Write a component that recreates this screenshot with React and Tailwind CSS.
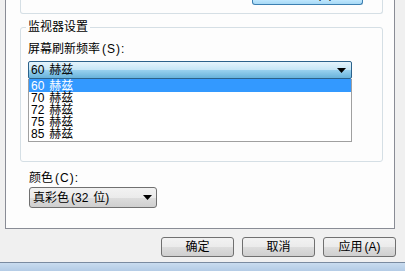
import React from "react";

const Arrow = () => (
  <svg width="9" height="5" viewBox="0 0 9 5" className="block">
    <polygon points="0,0 9,0 4.5,5" fill="#000" />
  </svg>
);

const grayBtn =
  "bg-[linear-gradient(to_bottom,#f2f2f2_0%,#ebebeb_50%,#dddddd_51%,#cfcfcf_100%)] border border-[#707070] rounded-[3px]";

export default function App() {
  const items = ["60", "70", "72", "75", "85"];
  return (
    <div className="w-[405px] h-[271px] bg-[#f0f0f0] overflow-hidden flex flex-col text-[12px] text-black font-['Liberation_Sans','Noto_Sans_CJK_SC',sans-serif]">
      {/* tab page */}
      <div className="ml-[5px] w-[390px] h-[229px] shrink-0 bg-[#fdfdfd] border-x border-b border-[#898c95] flex flex-col pl-[14px]">
        {/* previous group box (cut off) */}
        <div className="w-[363px] h-[14px] shrink-0 border-x border-b border-[#d5dfe5] rounded-b-[3px] flex justify-end items-end pr-[19px] pb-[8px]">
          <div className="w-[111px] h-[5px] overflow-hidden border-x border-b border-[#3c7fb1] rounded-b-[3px] bg-[linear-gradient(to_bottom,#bee6fd,#a7d9f5)]">
            <div className="h-[24px] mt-[-18px] flex items-center justify-center gap-[2px] leading-[12px]">
              <span className="w-[9px] h-[9px] rounded-full border border-[#555]"></span>
              <span>属性(P)</span>
            </div>
          </div>
        </div>

        {/* monitor settings group */}
        <div className="relative mt-[13px] w-[363px] h-[135px] shrink-0 border border-[#d5dfe5] rounded-[3px] pl-[7px]">
          <div className="absolute left-[5px] top-[-9px] px-[2px] bg-[#fdfdfd] leading-[16px] text-[12px]">
            监视器设置
          </div>
          <div className="mt-[14px] leading-[14px]">
            屏幕刷新频率<span className="ml-[2px] tracking-[1px]">(S):</span>
          </div>
          <div className="mt-[5px] w-[324px] h-[18px] border border-[#2c628b] rounded-[2px] bg-[linear-gradient(to_bottom,#e5f4fc_0%,#c4e5f6_50%,#98d1ef_51%,#68b3db_100%)] flex items-center justify-between pl-[2px] pr-[5px] leading-[14px]">
            <span>
              60<span className="ml-[5px]">赫兹</span>
            </span>
            <Arrow />
          </div>
          <div className="w-[324px] h-[63px] bg-white border-x border-b border-[#a0a0a0] flex flex-col">
            {items.map((v, i) => (
              <div
                key={v}
                className={
                  i === 0
                    ? "h-[13px] pt-[1px] bg-[#3399ff] text-white pl-[2px] leading-[12px]"
                    : "h-[12px] pl-[2px] leading-[12px]"
                }
              >
                {v}
                <span className="ml-[5px]">赫兹</span>
              </div>
            ))}
          </div>
        </div>

        <div className="mt-[9px] ml-[9px] leading-[14px]">
          颜色<span className="ml-[2px] tracking-[1px]">(C):</span>
        </div>
        <div className={"mt-[2px] ml-[9px] w-[128px] h-[21px] flex items-center justify-between pl-[3px] pr-[4px] " + grayBtn}>
          <span className="leading-[14px]">
            真彩色<span className="ml-[2px]">(32</span>
            <span className="ml-[5px]">位)</span>
          </span>
          <Arrow />
        </div>
      </div>

      {/* buttons */}
      <div className="mt-[8px] pl-[161px] flex gap-[8px]">
        <div className={"w-[73px] h-[20px] flex items-center justify-center " + grayBtn}>确定</div>
        <div className={"w-[73px] h-[20px] flex items-center justify-center " + grayBtn}>取消</div>
        <div className={"w-[73px] h-[20px] flex items-center justify-center " + grayBtn}>
          应用<span className="ml-[2px]">(A)</span>
        </div>
      </div>

      <div className="flex-1"></div>
      <div className="h-[9px] shrink-0 border-t border-[#7a8ba0] bg-[linear-gradient(to_bottom,#c9dcef,#b4cce6)]"></div>
    </div>
  );
}
